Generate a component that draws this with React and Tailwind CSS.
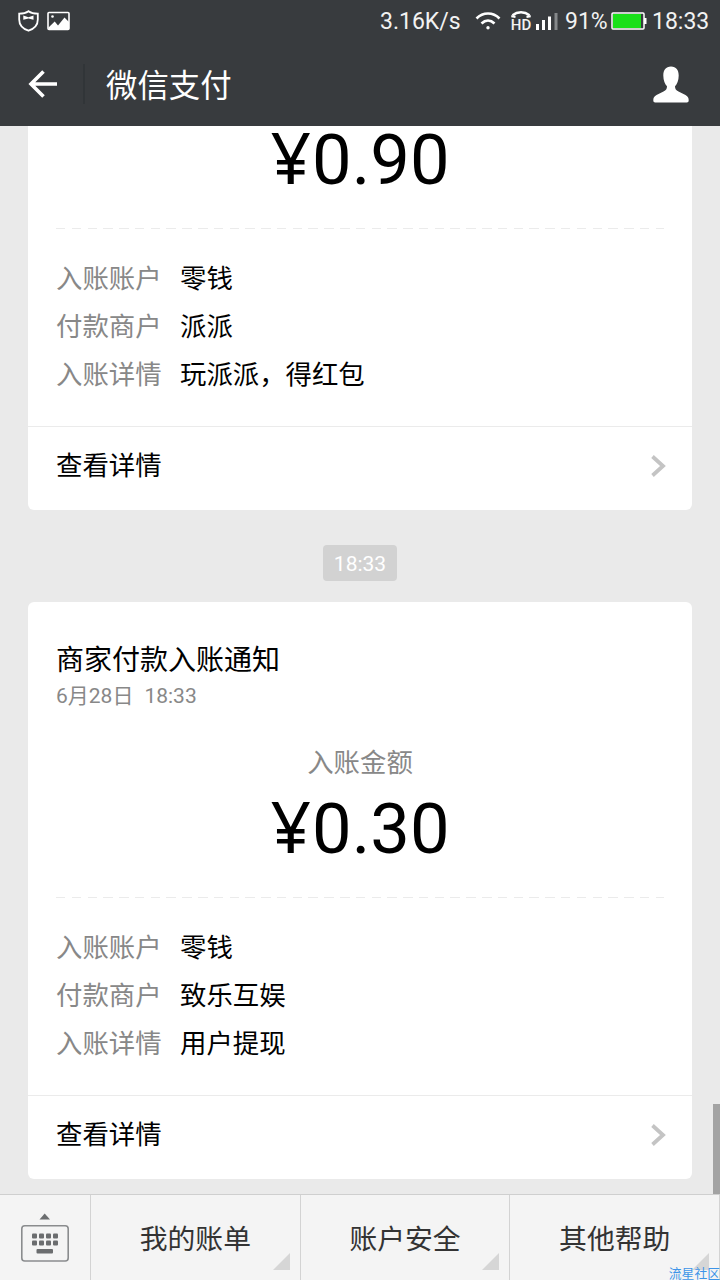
const RECEIPTS = [
  {
    amount: '0.90',
    rows: [
      ['入账账户', '零钱'],
      ['付款商户', '派派'],
      ['入账详情', '玩派派，得红包'],
    ],
  },
  {
    title: '商家付款入账通知',
    date: '6月28日',
    time: '18:33',
    amount: '0.30',
    rows: [
      ['入账账户', '零钱'],
      ['付款商户', '致乐互娱'],
      ['入账详情', '用户提现'],
    ],
  },
];

const MENU = ['我的账单', '账户安全', '其他帮助'];

const StatusBar = () => (
  <div className="flex h-[42px] items-center text-[23px] leading-none text-[#f2f2f2]">
    <svg className="ml-[18px]" width="21" height="22" viewBox="0 0 21 22" fill="none">
      <path d="M10.5 1.2C8 3 4.500 3.700 1.200 3.700V9.500C1.200 15 4.500 18.700 10.500 20.700C16.500 18.700 19.800 15 19.800 9.500V3.700C16.500 3.700 13 3 10.500 1.200Z" stroke="#fff" strokeWidth="1.8" />
      <path d="M5.300 5.500L10.500 7.200L15.500 5.500V9.800L10.500 8.500L5.300 9.800Z" fill="#fff" />
    </svg>
    <svg className="ml-2" width="23" height="20" viewBox="0 0 23 20" fill="none">
      <rect x="1" y="1.500" width="21" height="17" rx="1" stroke="#fff" strokeWidth="1.600" />
      <circle cx="5.500" cy="5.500" r="1.300" fill="#fff" />
      <path d="M1.500 16.500L7.700 10.500L11 14.500L17.500 6.500L22 11V18.500H1.500Z" fill="#fff" />
    </svg>
    <span className="ml-[310px] w-[83px] whitespace-nowrap">3.16K/s</span>
    <svg className="ml-3" width="26" height="20" viewBox="0 0 26 20" fill="none" stroke="#fff" strokeWidth="2.600">
      <path d="M1.500 7.500C8 0.800 18 0.800 24.500 7.500" />
      <path d="M6.500 12.500C10.500 8.500 15.500 8.500 19.500 12.500" />
      <circle cx="13" cy="16.700" r="1.700" fill="#fff" stroke="none" />
    </svg>
    <div className="ml-[9px] flex w-[22px] flex-col items-center">
      <svg width="22" height="7" viewBox="0 0 22 7" fill="none" stroke="#fff">
        <path d="M2.500 4.200C7.500 0.300 14.500 0.300 19.500 4.200" strokeWidth="2.400" />
        <path d="M1.300 5.200L5.500 5.800M20.700 5.200L16.500 5.800" strokeWidth="2.200" />
      </svg>
      <span className="pt-px text-[15px] leading-[12px] font-medium">HD</span>
    </div>
    <svg className="ml-[4px]" width="22" height="18" viewBox="0 0 22 18">
      <path d="M0 12H3V18H0ZM6 8H9V18H6ZM12 4.500H15V18H12Z" fill="#fff" />
      <path d="M18.500 1H21.500V18H18.500Z" fill="#85888a" />
    </svg>
    <span className="ml-[7px] w-[43px] whitespace-nowrap">91%</span>
    <svg className="ml-[3px]" width="36" height="18" viewBox="0 0 36 18">
      <rect x="1" y="1" width="32" height="16" rx="1" fill="none" stroke="#fff" strokeWidth="1.500" />
      <rect x="2" y="2" width="28" height="14" fill="#19e019" />
      <path d="M33 6H35.500V12H33Z" fill="#fff" />
    </svg>
    <span className="ml-[5px]">18:33</span>
  </div>
);

const TitleBar = () => (
  <div className="flex h-[84px] items-center">
    <svg className="ml-7" width="30" height="28" viewBox="0 0 30 28" fill="none" stroke="#fff" strokeWidth="3.600">
      <path d="M15.500 1.500L3 14L15.500 26.500M3 14H29" />
    </svg>
    <div className="ml-[25px] h-10 w-[2px] bg-[#313538]" />
    <h1 className="ml-[21px] flex-1 pt-[5px] text-[31.400px] text-white">微信支付</h1>
    <svg className="mr-[31px]" width="36" height="37" viewBox="0 0 36 37" fill="#fff">
      <path d="M18 0.500C12.800 0.500 10.300 4.200 10.300 9.500C10.300 14.500 12 18.300 14 20.300C14 23 13 24.200 10.500 25.500L3.500 29C0.800 30.500 0.300 32 0.300 34.500C0.300 35.700 1 36.500 2.200 36.500H33.800C35 36.500 35.700 35.700 35.700 34.500C35.700 32 35.200 30.500 32.500 29L25.500 25.500C23 24.200 22 23 22 20.300C24 18.300 25.700 14.500 25.700 9.500C25.700 4.200 23.200 0.500 18 0.500Z" />
    </svg>
  </div>
);

const ReceiptCard = ({ receipt }) => (
  <article className="shrink-0 rounded-[6px] bg-white pt-[42px] text-[26.400px] text-black">
    <div className="px-7">
      {receipt.title && (
        <>
          <h2 className="text-[28px] leading-[34px]">{receipt.title}</h2>
          <p className="flex gap-[11px] text-[21px] leading-9 text-[#888]">
            <span>{receipt.date}</span>
            <span>{receipt.time}</span>
          </p>
          <p className="mt-[31px] text-center leading-9 text-[#888]">入账金额</p>
        </>
      )}
      <p className="flex h-24 items-baseline justify-center text-[70.500px] leading-[90px]">
        <span className="mr-px font-['Noto_Sans'] text-[71px]">¥</span>
        <span>{receipt.amount}</span>
      </p>
      <div className="mt-5 h-px bg-[repeating-linear-gradient(90deg,#ebebeb_0_9.5px,#fff_9.5px_15.78px)]" />
      <dl className="mt-[26px]">
        {receipt.rows.map(([label, value]) => (
          <div key={label} className="flex leading-[48px]">
            <dt className="w-[124px] text-[#888]">{label}</dt>
            <dd>{value}</dd>
          </div>
        ))}
      </dl>
    </div>
    <div className="mt-[27px] flex h-[84px] items-center justify-between border-t border-[#ebebeb] pr-[26px] pb-[6px] pl-7">
      <span className="pt-[3px]">查看详情</span>
      <svg width="15" height="22" viewBox="0 0 15 22" fill="none" stroke="#c4c4c4" strokeWidth="3.800">
        <path d="M1.500 1.500L12 11L1.500 20.500" />
      </svg>
    </div>
  </article>
);

const KeyboardIcon = () => (
  <svg width="48" height="50" viewBox="0 0 48 50" fill="#6b6d6f">
    <path d="M18.500 6.500L23.700 0.500L29 6.500Z" />
    <rect x="0.800" y="12.800" width="46.400" height="35.200" rx="3" fill="none" stroke="#8a8c8e" strokeWidth="1.600" />
    {[20.500, 27.500].map(y =>
      [11, 18, 25, 32].map(x => <rect key={`${x}-${y}`} x={x} y={y} width="5" height="5" rx="1" />)
    )}
    <rect x="15.500" y="36" width="16.500" height="4.500" rx="1" />
  </svg>
);

const App = () => (
  <div className="relative flex h-[1280px] w-[720px] flex-col overflow-hidden bg-[#eaeaea] font-['Roboto','Noto_Sans_CJK_SC',sans-serif]">
    <header className="bg-[#383b3e]">
      <StatusBar />
      <TitleBar />
    </header>

    {/* pinned to the newest message, older ones run off the top */}
    <main className="relative flex h-[1068px] flex-col justify-end overflow-hidden px-7 pb-[15px]">
      <ReceiptCard receipt={RECEIPTS[0]} />
      <div className="flex h-[92px] shrink-0 items-center justify-center pt-[14px]">
        <span className="h-9 w-[74px] rounded-[4px] bg-[#d2d2d2] text-center text-[21px] leading-[39px] text-white">18:33</span>
      </div>
      <ReceiptCard receipt={RECEIPTS[1]} />
      <div className="absolute right-0 bottom-0 h-[90px] w-[7px] bg-[#a3a3a3]" />
    </main>

    <nav className="flex h-[86px] border-t border-[#cfcfcf] bg-[#f4f4f4]">
      <div className="flex w-[90px] items-start justify-center pt-[18px]">
        <KeyboardIcon />
      </div>
      <div className="flex flex-1 border-r border-[#d3d3d3]">
        {MENU.map(item => (
          <div key={item} className="relative flex flex-1 items-center justify-center border-l border-[#d3d3d3] pt-[5px] text-[27.800px] text-[#333]">
            {item}
            <svg className="absolute right-[10px] bottom-[10px]" width="17" height="17" viewBox="0 0 17 17">
              <path d="M17 0V17H0Z" fill="#d6d6d6" />
            </svg>
          </div>
        ))}
      </div>
    </nav>

    <span className="absolute right-0 bottom-[-3px] text-[12.800px] leading-[18px] text-[#3d94e8]">流星社区</span>
  </div>
);

export default App;
